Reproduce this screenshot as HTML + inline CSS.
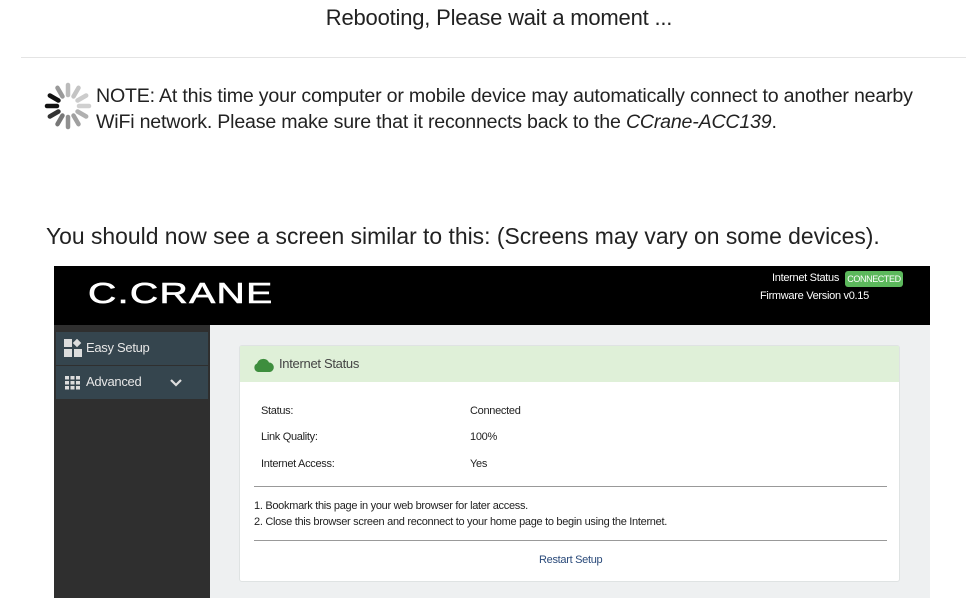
<!DOCTYPE html>
<html><head><meta charset="utf-8"><style>
*{margin:0;padding:0;box-sizing:border-box}
body{width:966px;height:610px;background:#fff;position:relative;overflow:hidden;font-family:"Liberation Sans",Arial,sans-serif;color:#222}
.abs{position:absolute}
.title{top:5px;left:0;width:998px;text-align:center;font-size:22px;letter-spacing:-0.2px;color:#222}
.hr{top:57px;left:21px;width:945px;height:1px;background:#e4e4e4}
.note{left:96px;top:83px;font-size:19.6px;line-height:26px;color:#222;letter-spacing:-0.2px}
.you{left:46px;top:223px;font-size:22.9px;color:#222}
.hdr{left:54px;top:266px;width:876px;height:59px;background:#000}
.logo{left:88px;top:278px;color:#fff;font-size:29px;font-weight:normal;-webkit-text-stroke:0.6px #fff;letter-spacing:1px;font-family:"Liberation Sans",sans-serif;transform:scaleX(1.35);transform-origin:left}
.side{left:54px;top:325px;width:156px;height:273px;background:#2f2f2f}
.item{left:56px;width:152px;height:33px;background:#35454e;color:#e6e6e6;font-size:13px;line-height:31px;padding-left:30px;letter-spacing:-0.3px}
.main{left:210px;top:325px;width:720px;height:273px;background:#eef0f1}
.card{left:239px;top:345px;width:661px;height:237px;background:#fff;border:1px solid #dfe3e3;border-radius:3px}
.ch{left:240px;top:346px;width:659px;height:36px;background:#dff0d8;font-size:13px;color:#444;line-height:36px;padding-left:39px;letter-spacing:-0.3px}
.t{font-size:11px;color:#222;letter-spacing:-0.3px}
.ln{height:1px;background:#999;left:254px;width:633px}
</style></head><body>
<div class="abs title">Rebooting, Please wait a moment ...</div>
<div class="abs hr"></div>
<svg class="abs" style="left:42px;top:80px" width="52" height="52" viewBox="-26 -26 52 52">
<g stroke-linecap="round" stroke-width="4.5">
<line x1="0" y1="-11" x2="0" y2="-21" stroke="#bbb" transform="rotate(0)"/>
<line x1="0" y1="-11" x2="0" y2="-21" stroke="#c4c4c4" transform="rotate(30)"/>
<line x1="0" y1="-11" x2="0" y2="-21" stroke="#ccc" transform="rotate(60)"/>
<line x1="0" y1="-11" x2="0" y2="-21" stroke="#d0d0d0" transform="rotate(90)"/>
<line x1="0" y1="-11" x2="0" y2="-21" stroke="#b0b0b0" transform="rotate(120)"/>
<line x1="0" y1="-11" x2="0" y2="-21" stroke="#a0a0a0" transform="rotate(150)"/>
<line x1="0" y1="-11" x2="0" y2="-21" stroke="#909090" transform="rotate(180)"/>
<line x1="0" y1="-11" x2="0" y2="-21" stroke="#777" transform="rotate(210)"/>
<line x1="0" y1="-11" x2="0" y2="-21" stroke="#333" transform="rotate(240)"/>
<line x1="0" y1="-11" x2="0" y2="-21" stroke="#111" transform="rotate(270)"/>
<line x1="0" y1="-11" x2="0" y2="-21" stroke="#111" transform="rotate(300)"/>
<line x1="0" y1="-11" x2="0" y2="-21" stroke="#999" transform="rotate(330)"/>
</g></svg>
<div class="abs note">NOTE: At this time your computer or mobile device may automatically connect to another nearby<br>WiFi network. Please make sure that it reconnects back to the <i>CCrane-ACC139</i>.</div>
<div class="abs you">You should now see a screen similar to this: (Screens may vary on some devices).</div>
<div class="abs hdr"></div>
<div class="abs logo">C.CRANE</div>
<div class="abs t" style="left:772px;top:272px;color:#fff">Internet Status</div>
<div class="abs" style="left:845px;top:271px;width:58px;height:16px;background:#5cb85c;border-radius:3px;color:#fff;font-size:9px;line-height:16px;text-align:center;letter-spacing:-0.4px">CONNECTED</div>
<div class="abs t" style="left:760px;top:290px;color:#fff">Firmware Version v0.15</div>
<div class="abs side"></div>
<div class="abs item" style="top:332px">Easy Setup</div>
<div class="abs item" style="top:366px">Advanced</div>
<svg class="abs" style="left:64px;top:339px" width="18" height="18"><rect x="0" y="0" width="8" height="8" fill="#ddd"/><rect x="0" y="10" width="8" height="8" fill="#ddd"/><rect x="10" y="10" width="8" height="8" fill="#ddd"/><rect x="10" y="1" width="6" height="6" fill="#ddd" transform="rotate(45 13 4)"/></svg>
<svg class="abs" style="left:65px;top:376px" width="15" height="14" fill="#ddd"><rect x="0" y="0" width="4" height="3.5"/><rect x="5.5" y="0" width="4" height="3.5"/><rect x="11" y="0" width="4" height="3.5"/><rect x="0" y="5" width="4" height="3.5"/><rect x="5.5" y="5" width="4" height="3.5"/><rect x="11" y="5" width="4" height="3.5"/><rect x="0" y="10" width="4" height="3.5"/><rect x="5.5" y="10" width="4" height="3.5"/><rect x="11" y="10" width="4" height="3.5"/></svg>
<svg class="abs" style="left:170px;top:379px" width="12" height="8"><path d="M1 1 L6 6 L11 1" stroke="#ddd" stroke-width="2.2" fill="none"/></svg>
<div class="abs main"></div>
<div class="abs card"></div>
<div class="abs ch">Internet Status</div>
<svg class="abs" style="left:253px;top:357px" width="22" height="16"><path d="M5 15 A4.5 4.5 0 0 1 4 6.5 A6.5 6.5 0 0 1 16 5.5 A4.8 4.8 0 0 1 17 15 Z" fill="#3e8e3e"/></svg>
<div class="abs t" style="left:261px;top:405px">Status:</div>
<div class="abs t" style="left:470px;top:405px">Connected</div>
<div class="abs t" style="left:261px;top:431px">Link Quality:</div>
<div class="abs t" style="left:470px;top:431px">100%</div>
<div class="abs t" style="left:261px;top:458px">Internet Access:</div>
<div class="abs t" style="left:470px;top:458px">Yes</div>
<div class="abs ln" style="top:486px"></div>
<div class="abs t" style="left:254px;top:500px">1. Bookmark this page in your web browser for later access.</div>
<div class="abs t" style="left:254px;top:516px">2. Close this browser screen and reconnect to your home page to begin using the Internet.</div>
<div class="abs ln" style="top:540px"></div>
<div class="abs t" style="left:539px;top:554px;color:#2a4a7a">Restart Setup</div>
</body></html>
